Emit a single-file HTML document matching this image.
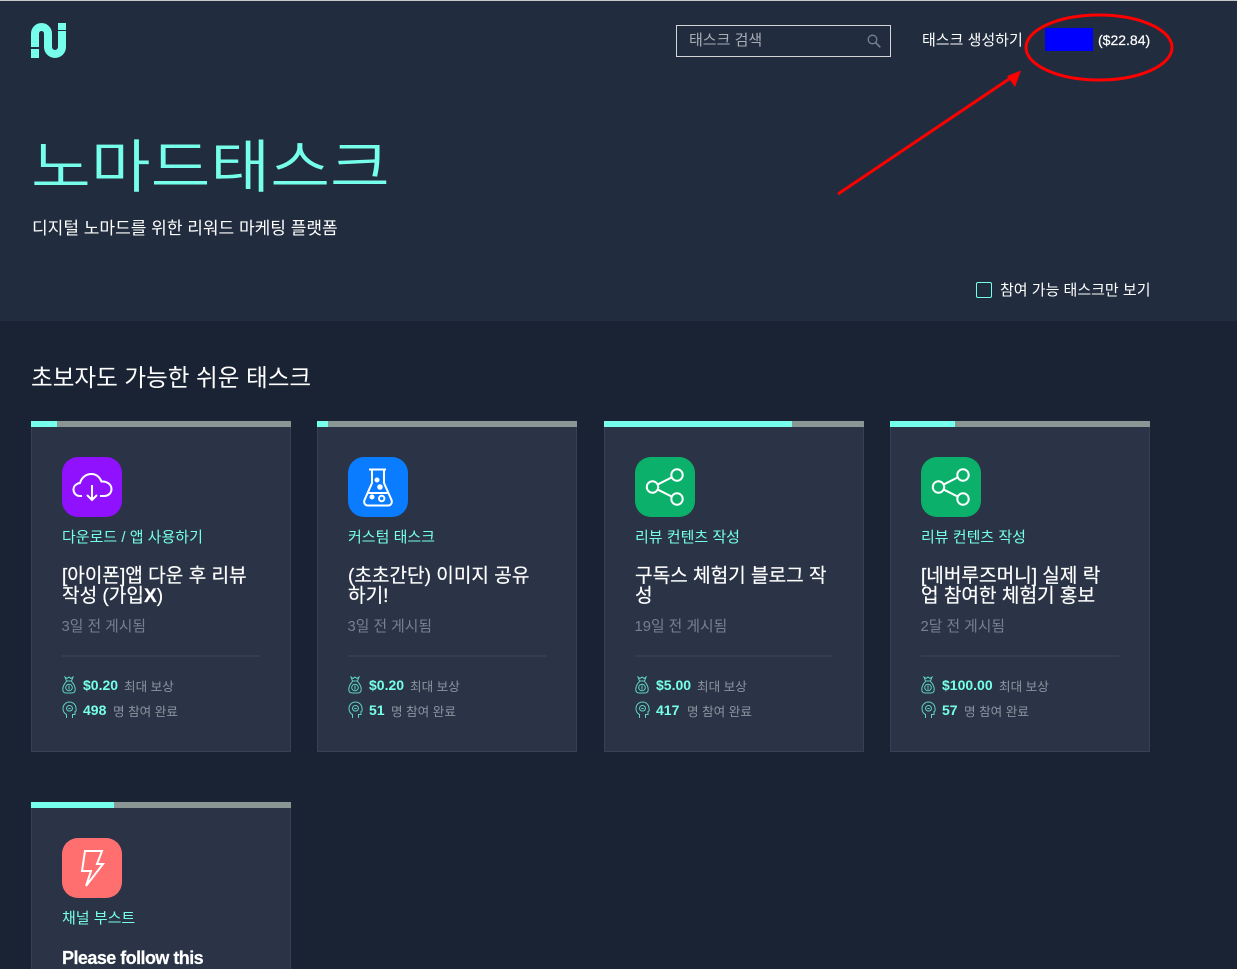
<!DOCTYPE html>
<html lang="ko">
<head>
<meta charset="utf-8">
<title>노마드태스크</title>
<style>
html,body{margin:0;padding:0;width:1237px;height:969px;overflow:hidden;}
body{position:relative;background:#1a2333;font-family:"Liberation Sans","Noto Sans CJK KR",sans-serif;color:#fff;}
.a{position:absolute;white-space:nowrap;}
.hero{position:absolute;left:0;top:0;width:1237px;height:321px;background:#212c3e;border-top:1px solid #c8c8c8;box-sizing:border-box;}
.card{position:absolute;width:260px;box-sizing:border-box;background:#2a3446;border:1px solid #364155;border-top:0;}
.bar{position:absolute;left:-1px;top:0;width:260px;height:6px;background:#8a9694;}
.bar i{display:block;height:6px;background:#76ffea;}
.ic{position:absolute;left:30px;top:36px;width:60px;height:60px;border-radius:16px;}
.ic svg{display:block;}
.cat{position:absolute;left:30px;top:107px;font-size:15px;line-height:20px;color:#76ffea;white-space:nowrap;}
.tt{position:absolute;left:30px;top:146px;width:215px;font-size:19.100px;line-height:20px;color:#fff;white-space:nowrap;-webkit-text-stroke:.2px #fff;}
.dt{position:absolute;left:29.500px;top:196px;font-size:14.800px;line-height:20px;color:#768090;white-space:nowrap;}
.hr{position:absolute;left:30px;top:234px;width:198px;height:2px;background:#333e51;}
.rw{position:absolute;left:30px;height:20px;font-size:12.600px;line-height:20px;color:#8b949e;white-space:nowrap;}
.rw svg{position:absolute;left:0;top:0;}
.rw b{position:absolute;left:21px;top:-1px;font-size:14px;font-weight:bold;color:#76ffea;}
.rw span{position:absolute;top:1px;}
</style>
</head>
<body>
<div class="hero"></div>

<svg class="a" style="left:31px;top:23px" width="36" height="36" viewBox="0 0 36 36">
<path d="M4 24V10.500A6.500 6.500 0 0 1 17 10.500V24A7 7 0 0 0 31 24V8" fill="none" stroke="#76ffea" stroke-width="8"/>
<rect x="0" y="26" width="8" height="9" fill="#76ffea"/>
<rect x="27" y="0" width="8" height="7" fill="#76ffea"/>
</svg>

<div class="a" style="left:676px;top:25px;width:215px;height:32px;box-sizing:border-box;border:1px solid #d5d5d5;"></div>
<div class="a" style="left:689px;top:31px;font-size:15px;line-height:20px;color:#a9aeb5;">태스크 검색</div>
<svg class="a" style="left:866px;top:33px" width="16" height="16" viewBox="0 0 16 16"><circle cx="6.500" cy="6.500" r="4.300" fill="none" stroke="#7b838e" stroke-width="1.300"/><path d="M9.700 9.700L14.300 14.300" stroke="#7b838e" stroke-width="1.500"/></svg>
<div class="a" style="left:922px;top:31px;font-size:15px;line-height:20px;color:#fff;">태스크 생성하기</div>
<div class="a" style="left:1045px;top:28px;width:48px;height:23px;background:#0000fe;"></div>
<div class="a" style="left:1098px;top:30px;font-size:14px;line-height:20px;color:#fff;-webkit-text-stroke:.2px #fff;">($22.84)</div>

<div class="a" style="left:31px;top:117px;font-size:65px;line-height:90px;font-weight:350;color:#76ffea;transform:scaleY(.88);transform-origin:0 100%;">노마드태스크</div>
<div class="a" style="left:32px;top:218px;font-size:17.050px;line-height:22px;color:#fff;">디지털 노마드를 위한 리워드 마케팅 플랫폼</div>

<div class="a" style="left:976px;top:282px;width:16px;height:16px;box-sizing:border-box;border:1px solid #76ffea;border-radius:2px;"></div>
<div class="a" style="left:1000px;top:281px;font-size:15px;line-height:20px;color:#fff;">참여 가능 태스크만 보기</div>

<div class="a" style="left:31px;top:363px;font-size:23.600px;line-height:32px;color:#fff;">초보자도 가능한 쉬운 태스크</div>

<!-- card 1 -->
<div class="card" style="left:31px;top:421px;height:331px;">
<div class="bar"><i style="width:26px"></i></div>
<div class="ic" style="background:#8f11fe;">
<svg width="60" height="60" viewBox="0 0 60 60" fill="none" stroke="#fff" stroke-width="2"><path d="M20 39H18C14 39 11.500 36 11.500 32.500C11.500 28.800 14.500 26.500 18 26C19.500 20.500 24 17 29.500 17C34.500 17 38 20.500 39.500 24.500C45 24 49.500 27.500 49.500 32C49.500 36 46.500 39 42 39H38"/><path d="M30 28V43M25 38L30 43L35 38"/></svg>
</div>
<div class="cat">다운로드 / 앱 사용하기</div>
<div class="tt">[아이폰]앱 다운 후 리뷰<br>작성 (가입<b>X</b>)</div>
<div class="dt">3일 전 게시됨</div>
<div class="hr"></div>
<div class="rw" style="top:255px"><svg width="14" height="18" viewBox="0 0 14 18" fill="none" stroke="#5fd3c4" stroke-width="1"><path d="M3 1L5 2.500L7 1L9 2.500L11 1L9.500 5H4.500Z"/><path d="M4.500 5.500C2 8 .8 11 .8 13.500C.8 16 2.500 17 4.500 17H9.500C11.500 17 13.200 16 13.200 13.500C13.200 11 12 8 9.500 5.500"/><circle cx="7" cy="11.500" r="3.300"/><path d="M7 9.500V13.500"/></svg><b>$0.20</b><span style="left:62px">최대 보상</span></div>
<div class="rw" style="top:280px"><svg width="15" height="18" viewBox="0 0 15 18" fill="none" stroke="#5fd3c4" stroke-width="1"><path d="M4.500 17V13.500C2.300 12.300 1 10 1 7.500C1 3.800 4 1 7.500 1C11 1 14 3.800 14 7.500C14 8.500 14.500 9.500 14 10L13 10.500V13.500H10.500V17"/><path d="M4.500 7.500A3 3 0 0 1 10.500 7.500C10.500 9 9 10 7.500 10C6 10 4.500 9 4.500 7.500M6.300 7.500H8.700"/></svg><b>498</b><span style="left:51px">명 참여 완료</span></div>
</div>

<!-- card 2 -->
<div class="card" style="left:317px;top:421px;height:331px;">
<div class="bar"><i style="width:11px"></i></div>
<div class="ic" style="background:#0a7cff;">
<svg width="60" height="60" viewBox="0 0 60 60" fill="none" stroke="#fff" stroke-width="2"><path d="M21 12.500H38M24 12.500V26L16.500 43C15.500 46 17 48.500 20 48.500H40C43 48.500 44.500 46 43.500 43L36 26V12.500"/><path d="M20.500 36H39.500"/><circle cx="29" cy="23" r="1.500" fill="#fff"/><circle cx="32" cy="30" r="1.800" fill="#fff"/><circle cx="24" cy="40" r="1.500" fill="#fff"/><circle cx="33.700" cy="41.500" r="2.700"/></svg>
</div>
<div class="cat">커스텀 태스크</div>
<div class="tt">(초초간단) 이미지 공유<br>하기!</div>
<div class="dt">3일 전 게시됨</div>
<div class="hr"></div>
<div class="rw" style="top:255px"><svg width="14" height="18" viewBox="0 0 14 18" fill="none" stroke="#5fd3c4" stroke-width="1"><path d="M3 1L5 2.500L7 1L9 2.500L11 1L9.500 5H4.500Z"/><path d="M4.500 5.500C2 8 .8 11 .8 13.500C.8 16 2.500 17 4.500 17H9.500C11.500 17 13.200 16 13.200 13.500C13.200 11 12 8 9.500 5.500"/><circle cx="7" cy="11.500" r="3.300"/><path d="M7 9.500V13.500"/></svg><b>$0.20</b><span style="left:62px">최대 보상</span></div>
<div class="rw" style="top:280px"><svg width="15" height="18" viewBox="0 0 15 18" fill="none" stroke="#5fd3c4" stroke-width="1"><path d="M4.500 17V13.500C2.300 12.300 1 10 1 7.500C1 3.800 4 1 7.500 1C11 1 14 3.800 14 7.500C14 8.500 14.500 9.500 14 10L13 10.500V13.500H10.500V17"/><path d="M4.500 7.500A3 3 0 0 1 10.500 7.500C10.500 9 9 10 7.500 10C6 10 4.500 9 4.500 7.500M6.300 7.500H8.700"/></svg><b>51</b><span style="left:43px">명 참여 완료</span></div>
</div>

<!-- card 3 -->
<div class="card" style="left:604px;top:421px;height:331px;">
<div class="bar"><i style="width:188px"></i></div>
<div class="ic" style="background:#0bb16b;">
<svg width="60" height="60" viewBox="0 0 60 60" fill="none" stroke="#fff" stroke-width="2"><circle cx="42" cy="18" r="5.700"/><circle cx="17.500" cy="30" r="5.700"/><circle cx="42" cy="42" r="5.700"/><path d="M23 27.300L36.500 20.500M23 32.700L36.500 39.500"/></svg>
</div>
<div class="cat">리뷰 컨텐츠 작성</div>
<div class="tt">구독스 체험기 블로그 작<br>성</div>
<div class="dt">19일 전 게시됨</div>
<div class="hr"></div>
<div class="rw" style="top:255px"><svg width="14" height="18" viewBox="0 0 14 18" fill="none" stroke="#5fd3c4" stroke-width="1"><path d="M3 1L5 2.500L7 1L9 2.500L11 1L9.500 5H4.500Z"/><path d="M4.500 5.500C2 8 .8 11 .8 13.500C.8 16 2.500 17 4.500 17H9.500C11.500 17 13.200 16 13.200 13.500C13.200 11 12 8 9.500 5.500"/><circle cx="7" cy="11.500" r="3.300"/><path d="M7 9.500V13.500"/></svg><b>$5.00</b><span style="left:62px">최대 보상</span></div>
<div class="rw" style="top:280px"><svg width="15" height="18" viewBox="0 0 15 18" fill="none" stroke="#5fd3c4" stroke-width="1"><path d="M4.500 17V13.500C2.300 12.300 1 10 1 7.500C1 3.800 4 1 7.500 1C11 1 14 3.800 14 7.500C14 8.500 14.500 9.500 14 10L13 10.500V13.500H10.500V17"/><path d="M4.500 7.500A3 3 0 0 1 10.500 7.500C10.500 9 9 10 7.500 10C6 10 4.500 9 4.500 7.500M6.300 7.500H8.700"/></svg><b>417</b><span style="left:52px">명 참여 완료</span></div>
</div>

<!-- card 4 -->
<div class="card" style="left:890px;top:421px;height:331px;">
<div class="bar"><i style="width:65px"></i></div>
<div class="ic" style="background:#0bb16b;">
<svg width="60" height="60" viewBox="0 0 60 60" fill="none" stroke="#fff" stroke-width="2"><circle cx="42" cy="18" r="5.700"/><circle cx="17.500" cy="30" r="5.700"/><circle cx="42" cy="42" r="5.700"/><path d="M23 27.300L36.500 20.500M23 32.700L36.500 39.500"/></svg>
</div>
<div class="cat">리뷰 컨텐츠 작성</div>
<div class="tt">[네버루즈머니] 실제 락<br>업 참여한 체험기 홍보</div>
<div class="dt">2달 전 게시됨</div>
<div class="hr"></div>
<div class="rw" style="top:255px"><svg width="14" height="18" viewBox="0 0 14 18" fill="none" stroke="#5fd3c4" stroke-width="1"><path d="M3 1L5 2.500L7 1L9 2.500L11 1L9.500 5H4.500Z"/><path d="M4.500 5.500C2 8 .8 11 .8 13.500C.8 16 2.500 17 4.500 17H9.500C11.500 17 13.200 16 13.200 13.500C13.200 11 12 8 9.500 5.500"/><circle cx="7" cy="11.500" r="3.300"/><path d="M7 9.500V13.500"/></svg><b>$100.00</b><span style="left:78px">최대 보상</span></div>
<div class="rw" style="top:280px"><svg width="15" height="18" viewBox="0 0 15 18" fill="none" stroke="#5fd3c4" stroke-width="1"><path d="M4.500 17V13.500C2.300 12.300 1 10 1 7.500C1 3.800 4 1 7.500 1C11 1 14 3.800 14 7.500C14 8.500 14.500 9.500 14 10L13 10.500V13.500H10.500V17"/><path d="M4.500 7.500A3 3 0 0 1 10.500 7.500C10.500 9 9 10 7.500 10C6 10 4.500 9 4.500 7.500M6.300 7.500H8.700"/></svg><b>57</b><span style="left:43px">명 참여 완료</span></div>
</div>

<!-- card 5 -->
<div class="card" style="left:31px;top:802px;height:200px;">
<div class="bar"><i style="width:83px"></i></div>
<div class="ic" style="background:#ff6f6f;">
<svg width="60" height="60" viewBox="0 0 60 60" fill="none" stroke="#fff" stroke-width="2"><path d="M23 13H40L35 26H41L24 48L29 33H20Z"/></svg>
</div>
<div class="cat">채널 부스트</div>
<div class="tt" style="font-weight:bold;font-size:18px;letter-spacing:-.55px;top:146px;">Please follow this</div>
</div>

<svg class="a" style="left:0;top:0;pointer-events:none" width="1237" height="969" viewBox="0 0 1237 969" fill="none">
<ellipse cx="1099" cy="47.500" rx="73" ry="32.500" stroke="#f00" stroke-width="3"/>
<path d="M838 194L1012 77" stroke="#f00" stroke-width="3"/>
<path d="M1021 70.500L1007 76L1015 87Z" fill="#f00"/>
</svg>
</body>
</html>
